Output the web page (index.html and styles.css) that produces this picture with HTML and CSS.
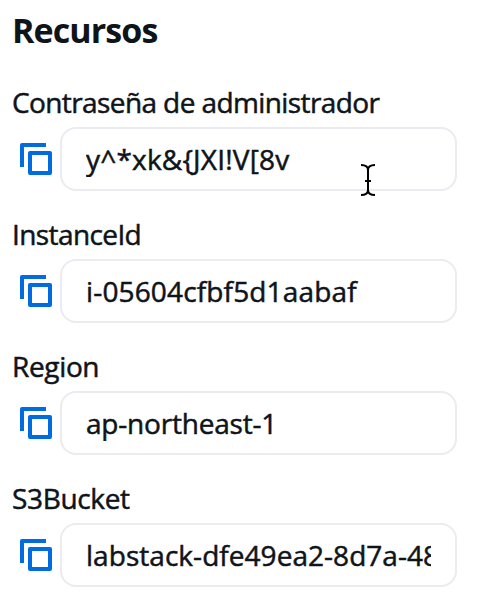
FILE: index.html
```html
<!DOCTYPE html>
<html lang="es">
<head>
<meta charset="utf-8">
<title>Recursos</title>
<link rel="stylesheet" href="styles.css">
</head>
<body>
<svg width="0" height="0" class="defs"><symbol id="copy" viewBox="0 0 32 32"><path d="M2 24V2H26M10 10H30V30H10Z" fill="none" stroke="currentColor" stroke-width="4" stroke-linejoin="round"/></symbol></svg>
<main class="panel">
<h1 class="title">Recursos</h1>
<section class="field"><h2 class="label t-admin">Contraseña de administrador</h2><div class="row"><svg class="copy"><use href="#copy"/></svg><div class="box"><div class="value t-password">y^*xk&amp;{JXI!V[8v</div></div></div></section>
<section class="field"><h2 class="label t-instance">InstanceId</h2><div class="row"><svg class="copy"><use href="#copy"/></svg><div class="box"><div class="value t-id">i-05604cfbf5d1aabaf</div></div></div></section>
<section class="field"><h2 class="label t-region">Region</h2><div class="row"><svg class="copy"><use href="#copy"/></svg><div class="box"><div class="value t-zone">ap-northeast-1</div></div></div></section>
<section class="field"><h2 class="label t-bucket">S3Bucket</h2><div class="row"><svg class="copy"><use href="#copy"/></svg><div class="box"><div class="value t-stack">labstack-dfe49ea2-8d7a-48</div></div></div></section>
</main>
<svg class="cursor" viewBox="0 0 16 34"><path d="M1 2Q8 2 8 7V27Q8 32 1 32M15 2Q8 2 8 7M8 27Q8 32 15 32M5 18H11" fill="none" stroke="#000" stroke-width="2"/></svg>
</body>
</html>
```
FILE: styles.css
```css
* { box-sizing: border-box; }
body { margin: 0; background: #fff; color: #0f141a; font-family: "Open Sans", sans-serif; overflow: hidden; }
.defs { position: absolute; }
.panel { width: 478px; height: 602px; padding: 11px 21px 0 12px; }
.title { margin: 0 0 37px; font-size: 34px; line-height: 38px; font-weight: 700; letter-spacing: -0.9px; }
.field { height: 132px; }
.label { margin: 0; height: 41px; font-size: 28px; line-height: 32px; font-weight: 400; white-space: nowrap; -webkit-text-stroke: 0.5px; }
.row { display: flex; align-items: center; gap: 8px; padding-left: 8px; }
.copy { width: 32px; height: 32px; color: #006ce0; flex: none; }
.box { flex: 1; min-width: 0; height: 64px; border: 2px solid #ebebf0; border-radius: 16px; padding: 12px 24px; }
.value { overflow: hidden; white-space: nowrap; font-size: 28px; line-height: 36px; -webkit-text-stroke: 0.5px; }
.t-admin { letter-spacing: -0.6px; }
.t-password { letter-spacing: 0.2px; }
.t-instance { letter-spacing: -0.6px; }
.t-id { letter-spacing: 0.15px; }
.t-region { letter-spacing: -0.35px; }
.t-zone { letter-spacing: -0.2px; }
.t-bucket { letter-spacing: -0.35px; }
.t-stack { letter-spacing: 0.04px; }
.cursor { position: absolute; left: 360px; top: 163px; width: 16px; height: 34px; }
```
